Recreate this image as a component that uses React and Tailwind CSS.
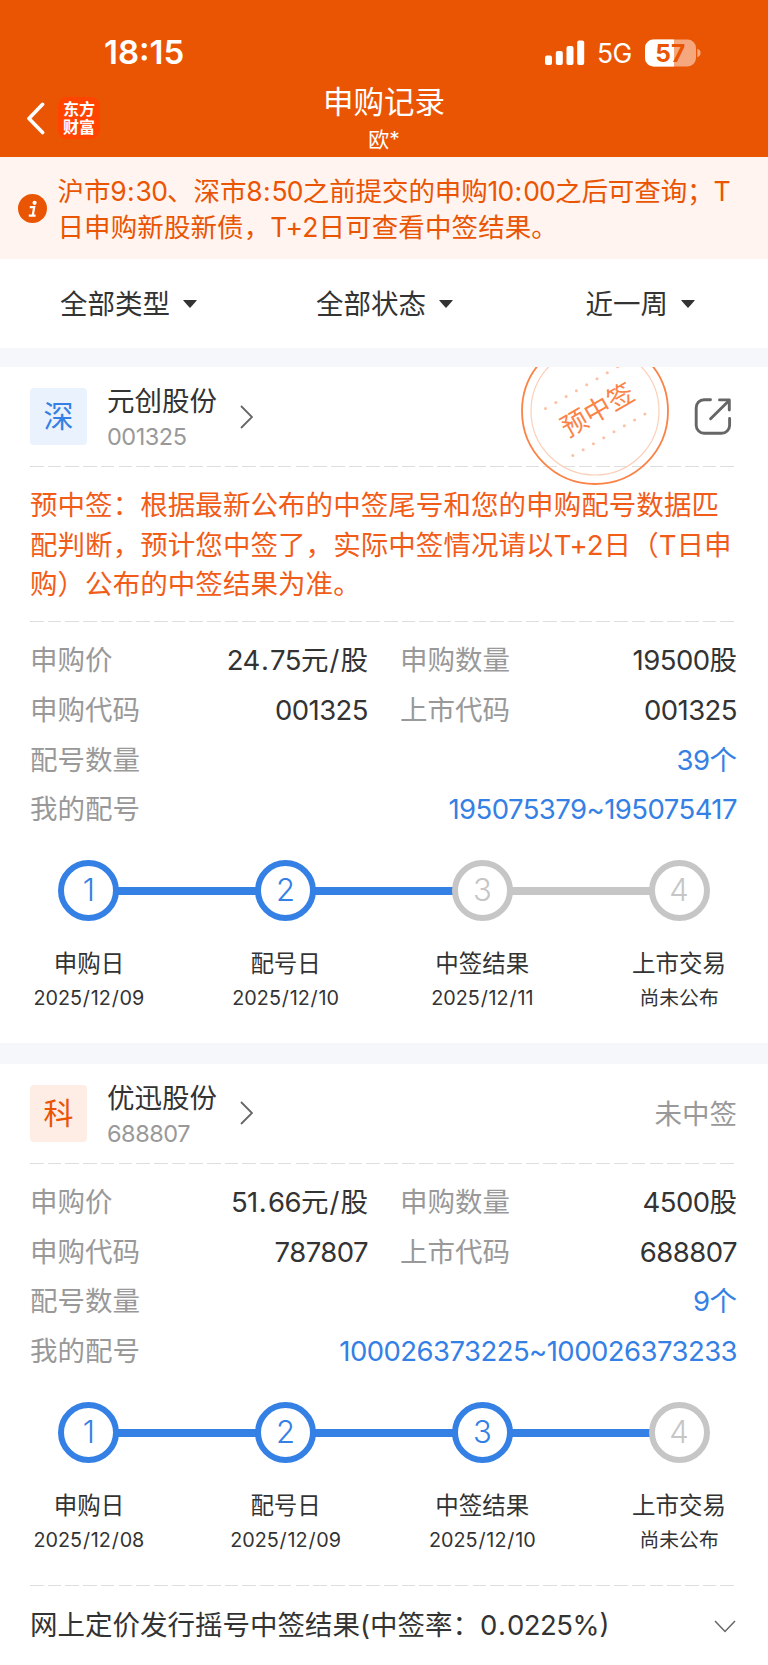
import React from 'react';

const records = [
  {
    id: 'sz',
    badge: '深',
    badgeClass: 'bg-[#eaf2fd] text-[#3480e4]',
    name: '元创股份',
    code: '001325',
    won: true,
    price: '24.75元/股',
    amount: '19500股',
    applyCode: '001325',
    listCode: '001325',
    count: '39个',
    numbers: '195075379~195075417',
    done: 2,
    steps: [
      ['申购日', '2025/12/09'],
      ['配号日', '2025/12/10'],
      ['中签结果', '2025/12/11'],
      ['上市交易', '尚未公布'],
    ],
  },
  {
    id: 'kc',
    badge: '科',
    badgeClass: 'bg-[#fdede5] text-[#ea5504]',
    name: '优迅股份',
    code: '688807',
    won: false,
    price: '51.66元/股',
    amount: '4500股',
    applyCode: '787807',
    listCode: '688807',
    count: '9个',
    numbers: '100026373225~100026373233',
    done: 3,
    steps: [
      ['申购日', '2025/12/08'],
      ['配号日', '2025/12/09'],
      ['中签结果', '2025/12/10'],
      ['上市交易', '尚未公布'],
    ],
  },
];

// Digits run slightly tight, with a little air around dots, slashes and colons
function Mixed({ children, digits = 'tracking-[-0.02em]' }) {
  return children.split(/([./:]|[0-9~]+)/).map((part, i) => {
    if (i % 2 === 0) return part;
    return (
      <span key={i} className={/[./:]/.test(part) ? 'px-[0.04em]' : digits}>{part}</span>
    );
  });
}

function Dashes() {
  return (
    <div className="mx-[30px] h-px w-[704px] bg-[repeating-linear-gradient(90deg,#dedede_0_13.6px,transparent_13.6px_17.7px)]" />
  );
}

function StatusBar() {
  return (
    <div className="flex h-[78px] items-center pt-[27px]">
      <div className="ml-[104px] w-[441px] text-[33px] font-semibold leading-none">18:15</div>
      <svg width="40" height="26" viewBox="0 0 40 26" fill="currentColor">
        <rect x="0" y="15.5" width="7" height="9.5" rx="2" />
        <rect x="10.8" y="11" width="7" height="14" rx="2" />
        <rect x="21.5" y="6" width="7" height="19" rx="2" />
        <rect x="32.2" y="0.5" width="7" height="24.5" rx="2" />
      </svg>
      <div className="ml-[12px] w-[48px] pt-px text-[26.5px] font-[430] leading-none tracking-[-0.02em]">5G</div>
      <svg width="57" height="28" viewBox="0 0 57 28">
        <defs>
          <clipPath id="charge">
            <rect x="0" y="0" width="29" height="28" />
          </clipPath>
        </defs>
        <rect x="0" y="0.5" width="51" height="27" rx="8.5" fill="#f5a77d" />
        <rect x="0" y="0.5" width="51" height="27" rx="8.5" fill="#fff" clipPath="url(#charge)" />
        <path d="M52.3 9.8c2.3.6 3.3 2.2 3.3 4.2s-1 3.6-3.3 4.2z" fill="#f5a77d" />
        <text x="25.3" y="22.5" textAnchor="middle" className="fill-[#ea5504] text-[24.5px] font-bold">57</text>
      </svg>
    </div>
  );
}

function Header() {
  return (
    <header className="h-[157px] bg-[#ea5504] text-white">
      <StatusBar />
      <div className="grid h-[79px] grid-cols-[1fr_200px_1fr]">
        <div className="flex items-start pl-[26px] pt-[19px]">
          <svg width="19" height="42" viewBox="0 0 19 42" fill="none" stroke="currentColor" strokeWidth="3.6" strokeLinecap="round" strokeLinejoin="round">
            <path d="M16.6 7.3 3 21.5l13.6 14" />
          </svg>
          <div className="ml-[13px] flex h-[42px] w-[42px] flex-col items-center justify-center rounded-[9px] bg-[#ff4400] text-[16px] font-bold leading-[18px]">
            <span>东方</span>
            <span>财富</span>
          </div>
        </div>
        <div className="flex flex-col items-center">
          <h1 className="mt-[4px] text-[30.5px] leading-[40px]">申购记录</h1>
          <div className="mt-[4px] text-[21px] leading-[28px]">欧*</div>
        </div>
      </div>
    </header>
  );
}

function Notice() {
  return (
    <div className="flex h-[102px] items-center bg-[#fff4ef] text-[#ea5504]">
      <svg className="ml-[18px] shrink-0" width="29" height="29" viewBox="0 0 29 29">
        <circle cx="14.5" cy="14.5" r="14.5" fill="#ea5504" />
        <circle cx="16.6" cy="8.8" r="2.1" fill="#fff" />
        <path d="M11.8 13.2h4.4l-1.5 8.3M10.8 21.6h6.8" fill="none" stroke="#fff" strokeWidth="2.2" />
      </svg>
      <div className="ml-[10.5px] whitespace-nowrap pt-px text-[26.5px] leading-[36px]">
        <div className="tracking-[-0.1px]"><Mixed digits="tracking-[-0.03em]">沪市9:30、深市8:50之前提交的申购10:00之后可查询；T</Mixed></div>
        <div className="tracking-[0.1px]">日申购新股新债，T+2日可查看中签结果。</div>
      </div>
    </div>
  );
}

function Filters() {
  return (
    <div className="flex h-[89px] items-center pl-[60px]">
      {[
        ['全部类型', 'w-[256px]'],
        ['全部状态', 'w-[269.5px]'],
        ['近一周', ''],
      ].map(([label, width]) => (
        <div key={label} className={`flex items-center gap-[12.5px] ${width}`}>
          <span className="pt-[2px]">{label}</span>
          <svg width="14" height="8" viewBox="0 0 14 8" fill="#333">
            <path d="M.8 0h12.4q1 0 .3.8L7.5 7.6q-.5.5-1 0L.5.8Q-.2 0 .8 0z" />
          </svg>
        </div>
      ))}
    </div>
  );
}

function Stamp() {
  const dots = [0, 1, 2, 3, 4, 5, 6, 7];
  return (
    <svg className="absolute left-[521px] top-[-30px]" width="148" height="148" viewBox="521 337 148 148">
      <circle cx="595" cy="411" r="73" fill="none" stroke="#fb8348" strokeWidth="1.8" />
      <circle cx="595" cy="411" r="64" fill="none" stroke="#fcd0b8" strokeWidth="1.2" />
      <g fill="#fbc1a3">
        {dots.map((i) => (
          <circle key={`a${i}`} cx={545.5 + i * 10.3} cy={408.5 - i * 5.95} r="1.5" />
        ))}
        {dots.map((i) => (
          <circle key={`b${i}`} cx={572.8 + i * 10.3} cy={455.6 - i * 5.95} r="1.5" />
        ))}
      </g>
      <text x="597.5" y="419.5" textAnchor="middle" transform="rotate(-30 597.5 410)" className="fill-[#fb8348] text-[26.5px] font-normal">
        预中签
      </text>
    </svg>
  );
}

function ShareIcon() {
  return (
    <svg className="ml-auto mr-[34px]" width="42" height="42" viewBox="692 396 42 42" fill="none" stroke="#666" strokeWidth="2.9" strokeLinecap="round" strokeLinejoin="round">
      <path d="M710.5 399.7H704a8 8 0 0 0-7.8 8V425.5a8 8 0 0 0 8 7.8H721.6a8 8 0 0 0 8-7.8V418.5" />
      <path d="M719.5 399.9h9.8V410M728.6 401l-18 17.8" />
    </svg>
  );
}

function Row({ label, value, blue }) {
  return (
    <div className="flex h-[49.7px] items-center justify-between">
      <span className="text-[#999]">{label}</span>
      <span className={blue ? 'text-[#3480e4]' : 'text-[#333]'}><Mixed>{value}</Mixed></span>
    </div>
  );
}

function Steps({ steps, done }) {
  return (
    <div className="mt-[25px] flex h-[183px] px-[58.4px]">
      {steps.map(([label, date], i) => (
        <React.Fragment key={label}>
          {i > 0 && (
            <div className={`-mx-0.5 mt-[27px] h-2 flex-1 ${i <= done ? 'bg-[#3480e4]' : 'bg-[#c6c6c6]'}`} />
          )}
          <div className="relative z-10 flex w-[61px] flex-col items-center whitespace-nowrap">
            <div
              className={`flex h-[61px] w-[61px] shrink-0 items-center justify-center rounded-full border-[6px] bg-white text-[31px] font-light ${
                i < done ? 'border-[#3480e4] text-[#3480e4]' : 'border-[#c6c6c6] text-[#c6c6c6]'
              }`}
            >
              {i + 1}
            </div>
            <div className="mt-[26px] text-[23.5px] leading-[34px]">{label}</div>
            <div className="mt-[3px] text-[19.8px] leading-[28px]"><Mixed digits="">{date}</Mixed></div>
          </div>
        </React.Fragment>
      ))}
    </div>
  );
}

function RecordCard({ record }) {
  return (
    <section className="relative overflow-hidden bg-white">
      <div className="flex h-[99px] items-center pl-[30px]">
        <div className={`flex h-[57px] w-[57px] items-center justify-center rounded-[4px] text-[30px] font-normal ${record.badgeClass}`}>
          {record.badge}
        </div>
        <div className="ml-[20px] w-[133px] pt-[3px]">
          <div className="leading-[36px]">{record.name}</div>
          <div className="pt-[2px] text-[23.5px] leading-[32px] tracking-[-0.02em] text-[#999]">{record.code}</div>
        </div>
        <svg width="13" height="24" viewBox="0 0 13 24" fill="none" stroke="#666" strokeWidth="1.8">
          <path d="M1 1l11 11L1 23" />
        </svg>
        {record.won ? <ShareIcon /> : <span className="ml-auto mr-[31px] pt-[2px] text-[#999]">未中签</span>}
      </div>
      <Dashes />
      {record.won && (
        <>
          <div className="h-[154px] whitespace-nowrap pl-[30px] pt-[19px] leading-[39.6px] tracking-[0.06px] text-[#f25c19]">
            <div>预中签：根据最新公布的中签尾号和您的申购配号数据匹</div>
            <div>配判断，预计您中签了，实际中签情况请以T+2日（T日申</div>
            <div>购）公布的中签结果为准。</div>
          </div>
          <Dashes />
          <Stamp />
        </>
      )}
      <div className="pl-[30px] pr-[31px] pt-[14px]">
        <div className="grid grid-cols-[338px_1fr] gap-x-[32px]">
          <Row label="申购价" value={record.price} />
          <Row label="申购数量" value={record.amount} />
          <Row label="申购代码" value={record.applyCode} />
          <Row label="上市代码" value={record.listCode} />
        </div>
        <Row label="配号数量" value={record.count} blue />
        <Row label="我的配号" value={record.numbers} blue />
      </div>
      <Steps steps={record.steps} done={record.done} />
    </section>
  );
}

export default function App() {
  return (
    <div className="h-[1665px] w-[768px] overflow-hidden bg-white font-['Inter','Noto_Sans_CJK_SC',sans-serif] text-[27.5px] font-[370] text-[#333]">
      <Header />
      <Notice />
      <Filters />
      <div className="h-[19px] bg-[#f6f7fa]" />
      <RecordCard record={records[0]} />
      <div className="h-[21px] bg-[#f6f7fa]" />
      <RecordCard record={records[1]} />
      <Dashes />
      <div className="flex h-[79px] items-center justify-between pl-[30px] pr-[32px] pt-[2px]">
        <span><Mixed>网上定价发行摇号中签结果(中签率：0.0225%)</Mixed></span>
        <svg width="22" height="13" viewBox="0 0 22 13" fill="none" stroke="#666" strokeWidth="1.5">
          <path d="M1 1l10 10.5L21 1" />
        </svg>
      </div>
    </div>
  );
}
